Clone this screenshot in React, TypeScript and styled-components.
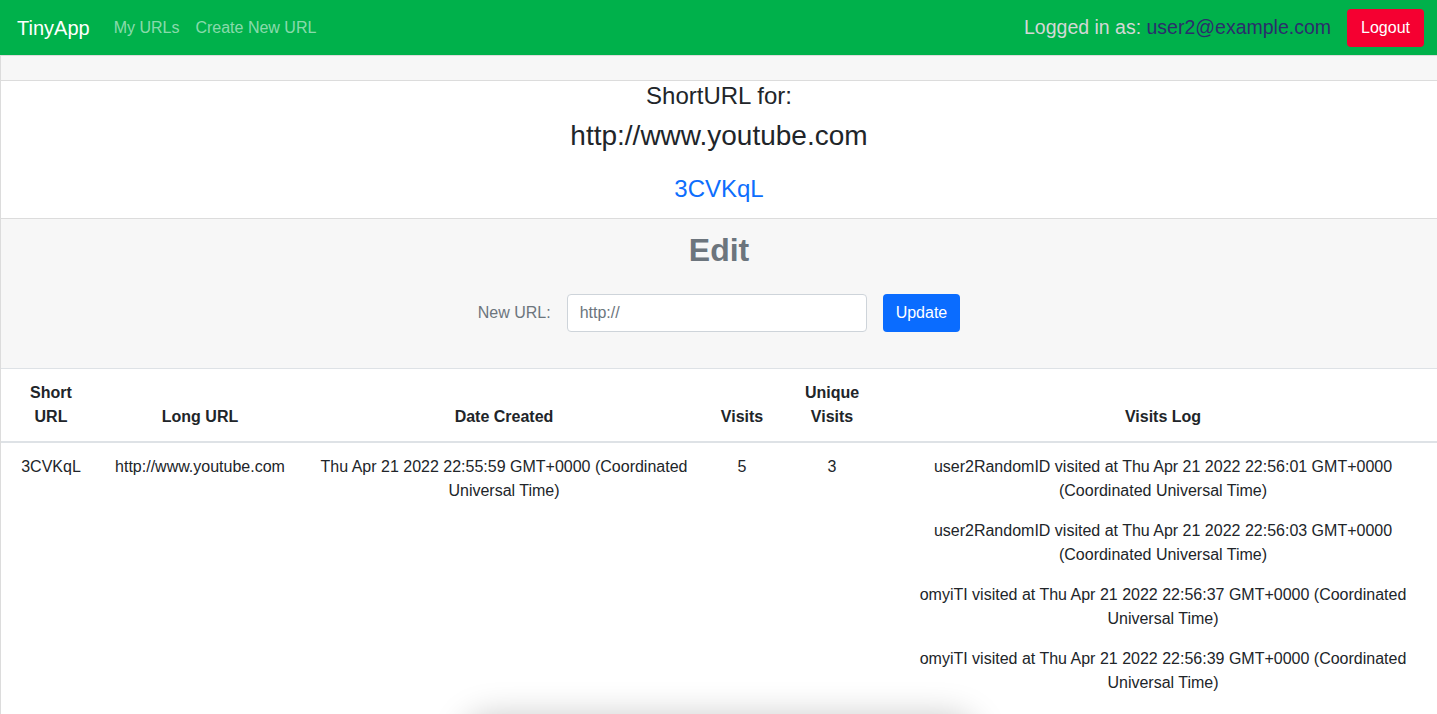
import styled, { createGlobalStyle } from "styled-components";

const GlobalStyle = createGlobalStyle`
  * {
    box-sizing: border-box;
  }

  body {
    margin: 0;
    background: #ffffff;
    color: #212529;
    font-family: "Liberation Sans", Arial, sans-serif;
    font-size: 16px;
    line-height: 1.5;
    overflow: hidden;
  }
`;

const Navbar = styled.nav`
  display: flex;
  align-items: center;
  justify-content: space-between;
  height: 55px;
  padding: 0 13px 0 17px;
  background: #00b14b;
`;

const NavLeft = styled.div`
  display: flex;
  align-items: center;
`;

const Brand = styled.a`
  margin-right: 16px;
  color: #ffffff;
  font-size: 20px;
  text-decoration: none;
`;

const NavLink = styled.a`
  padding: 0 8px;
  color: rgba(255, 255, 255, 0.55);
  font-size: 16px;
  text-decoration: none;
`;

const NavRight = styled.div`
  display: flex;
  align-items: center;
  gap: 16px;
`;

const LoggedIn = styled.span`
  color: #d3d8d6;
  font-size: 19.5px;
`;

const Email = styled.span`
  color: #2b2e6b;
`;

const Button = styled.button<{ $variant: "danger" | "primary" }>`
  height: 38px;
  padding: 0 ${({ $variant }) => ($variant === "danger" ? "14px" : "13px")};
  border: none;
  border-radius: 4px;
  background: ${({ $variant }) => ($variant === "danger" ? "#f50031" : "#0a6cff")};
  color: #ffffff;
  font-family: inherit;
  font-size: 16px;
  cursor: pointer;
`;

const Card = styled.main`
  border: 1px solid #dcdcdc;
  border-right: none;
  border-bottom: none;
`;

const CardHeader = styled.div`
  height: 25px;
  background: #f7f7f7;
  border-bottom: 1px solid #dcdcdc;
`;

const CardBody = styled.section`
  display: flex;
  flex-direction: column;
  align-items: center;
  padding: 1px 16px 14px;
`;

const Title = styled.h4`
  margin: 0 0 8px;
  font-size: 24px;
  font-weight: 400;
  line-height: 1.2;
`;

const LongUrl = styled.h3`
  margin: 0 0 23px;
  font-size: 28px;
  font-weight: 400;
  line-height: 1.2;
`;

const ShortLink = styled.a`
  color: #0d6efd;
  font-size: 24px;
  line-height: 1.2;
  text-decoration: none;
`;

const CardFooter = styled.section`
  display: flex;
  flex-direction: column;
  align-items: center;
  padding: 12px 16px 36px;
  background: #f7f7f7;
  border-top: 1px solid #dcdcdc;
  border-bottom: 1px solid #dee2e6;
`;

const EditTitle = styled.h2`
  margin: 0 0 24px;
  color: #6c757d;
  font-size: 32px;
  font-weight: 700;
  line-height: 1.2;
`;

const Form = styled.form`
  display: flex;
  align-items: center;
  gap: 16px;
`;

const Label = styled.label`
  color: #6c757d;
  font-size: 16px;
`;

const Input = styled.input`
  width: 300px;
  height: 38px;
  padding: 0 12px;
  border: 1px solid #ced4da;
  border-radius: 4px;
  background: #ffffff;
  font-family: inherit;
  font-size: 16px;

  &::placeholder {
    color: #6c757d;
  }
`;

const Table = styled.table`
  width: 100%;
  border-collapse: collapse;
  table-layout: fixed;
  text-align: center;
`;

const Th = styled.th`
  padding: 12px 8px;
  border-bottom: 2px solid #dee2e6;
  vertical-align: bottom;
  font-weight: 700;
`;

const Td = styled.td`
  padding: 12px 8px;
  vertical-align: top;
`;

const LogEntry = styled.p`
  margin: 0 0 16px;
`;

const BottomShadow = styled.div`
  position: fixed;
  left: 470px;
  top: 722px;
  width: 500px;
  height: 40px;
  border-radius: 20px;
  box-shadow: 0 0 34px 6px rgba(0, 0, 0, 0.22);
`;

const columns = [
  { label: ["Short", "URL"], width: 100 },
  { label: ["Long URL"], width: 198 },
  { label: ["Date Created"], width: 410 },
  { label: ["Visits"], width: 66 },
  { label: ["Unique", "Visits"], width: 114 },
  { label: ["Visits Log"], width: undefined },
];

const visits = [
  "user2RandomID visited at Thu Apr 21 2022 22:56:01 GMT+0000 (Coordinated Universal Time)",
  "user2RandomID visited at Thu Apr 21 2022 22:56:03 GMT+0000 (Coordinated Universal Time)",
  "omyiTI visited at Thu Apr 21 2022 22:56:37 GMT+0000 (Coordinated Universal Time)",
  "omyiTI visited at Thu Apr 21 2022 22:56:39 GMT+0000 (Coordinated Universal Time)",
];

export default function App() {
  return (
    <>
      <GlobalStyle />
      <Navbar>
        <NavLeft>
          <Brand href="#">TinyApp</Brand>
          <NavLink href="#">My URLs</NavLink>
          <NavLink href="#">Create New URL</NavLink>
        </NavLeft>
        <NavRight>
          <LoggedIn>
            Logged in as: <Email>user2@example.com</Email>
          </LoggedIn>
          <Button $variant="danger">Logout</Button>
        </NavRight>
      </Navbar>

      <Card>
        <CardHeader />
        <CardBody>
          <Title>ShortURL for:</Title>
          <LongUrl>http://www.youtube.com</LongUrl>
          <ShortLink href="#">3CVKqL</ShortLink>
        </CardBody>
        <CardFooter>
          <EditTitle>Edit</EditTitle>
          <Form onSubmit={(e) => e.preventDefault()}>
            <Label htmlFor="longURL">New URL:</Label>
            <Input id="longURL" type="text" placeholder="http://" />
            <Button $variant="primary" type="submit">
              Update
            </Button>
          </Form>
        </CardFooter>

        <Table>
          <colgroup>
            {columns.map((c, i) => (
              <col key={i} style={c.width ? { width: c.width } : undefined} />
            ))}
          </colgroup>
          <thead>
            <tr>
              {columns.map((c, i) => (
                <Th key={i}>
                  {c.label.map((line, j) => (
                    <div key={j}>{line}</div>
                  ))}
                </Th>
              ))}
            </tr>
          </thead>
          <tbody>
            <tr>
              <Td>3CVKqL</Td>
              <Td>http://www.youtube.com</Td>
              <Td>Thu Apr 21 2022 22:55:59 GMT+0000 (Coordinated Universal Time)</Td>
              <Td>5</Td>
              <Td>3</Td>
              <Td>
                {visits.map((v, i) => (
                  <LogEntry key={i}>{v}</LogEntry>
                ))}
              </Td>
            </tr>
          </tbody>
        </Table>
      </Card>
      <BottomShadow />
    </>
  );
}
